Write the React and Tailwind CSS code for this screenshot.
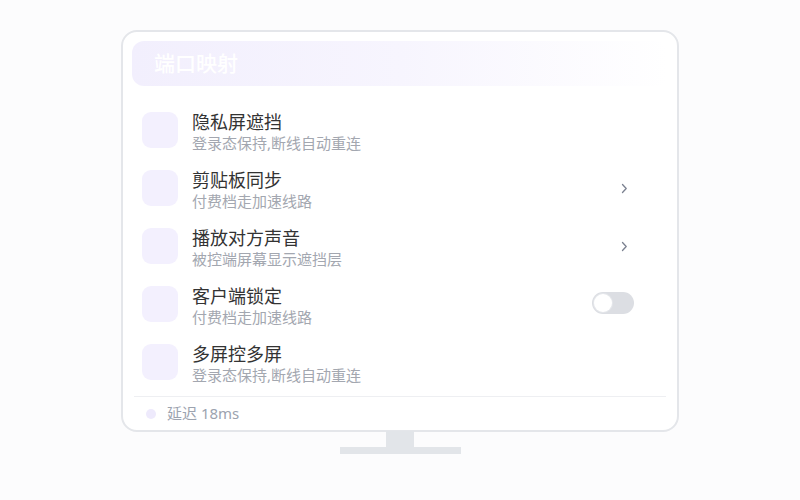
import React from "react";

const rows = [
    { title: "隐私屏遮挡", sub: "登录态保持,断线自动重连", right: null },
    { title: "剪贴板同步", sub: "付费档走加速线路", right: "chevron" },
    { title: "播放对方声音", sub: "被控端屏幕显示遮挡层", right: "chevron" },
    { title: "客户端锁定", sub: "付费档走加速线路", right: "toggle" },
    { title: "多屏控多屏", sub: "登录态保持,断线自动重连", right: null },
];

function Toggle() {
    return (
        <div className="w-[42px] h-[22px] rounded-full bg-[#dcdee3] p-[2px] flex items-center -mt-[6px]">
            <div className="w-[18px] h-[18px] rounded-full bg-white shadow-[0_0_0_1px_#e5e7eb]" />
        </div>
    );
}

function Chevron() {
    return (
        <svg width="7" height="11" viewBox="0 0 7 11" className="mr-[6px] -mt-[4px]">
            <path d="M1.5 1.5 L5.2 5.5 L1.5 9.5" fill="none" stroke="#7b8190" strokeWidth="1.3" strokeLinecap="round" strokeLinejoin="round" />
        </svg>
    );
}

export default function App() {
    return (
        <div
            className="w-[800px] h-[500px] bg-[#fcfcfd] flex flex-col items-center pt-[30px]"
            style={{ fontFamily: '"Noto Sans", "Noto Sans CJK SC", sans-serif' }}
        >
            <div className="w-[558px] h-[402px] rounded-[16px] border-2 border-[#e4e6ea] bg-white pt-[9px] px-[9px] flex flex-col">
                <div className="h-[45px] shrink-0 rounded-[12px] bg-gradient-to-r from-[#f2effd] via-[#f7f5fe] to-white flex items-center pl-[22px]">
                    <span className="text-[21px] font-medium text-white leading-none">端口映射</span>
                </div>

                <div className="flex flex-col pt-[17px] shrink-0">
                    {rows.map((r, i) => (
                        <div key={i} className="h-[58px] shrink-0 flex items-center pl-[10px] pr-[34px]">
                            <div className="w-[36px] h-[36px] rounded-[9px] bg-[#f3f0fe] shrink-0 -mt-[4px]" />
                            <div className="ml-[14px] flex-1 flex flex-col">
                                <span className="text-[18px] leading-[22px] text-[#333]">{r.title}</span>
                                <span className="text-[15px] leading-[20px] text-[#a3a7b0]">{r.sub}</span>
                            </div>
                            {r.right === "chevron" && <Chevron />}
                            {r.right === "toggle" && <Toggle />}
                        </div>
                    ))}
                </div>

                <div className="mt-[3px] mx-[2px] border-t border-[#eeeff2] flex items-center flex-1 pl-[12px]">
                    <div className="w-[10px] h-[10px] rounded-full bg-[#eeeafc]" />
                    <span className="ml-[11px] text-[15px] text-[#9ca3af]">延迟 18ms</span>
                </div>
            </div>
            <div className="w-[28px] h-[16px] bg-[#e2e5e9] -mt-[1px]" />
            <div className="w-[121px] h-[7px] bg-[#e2e5e9]" />
        </div>
    );
}
